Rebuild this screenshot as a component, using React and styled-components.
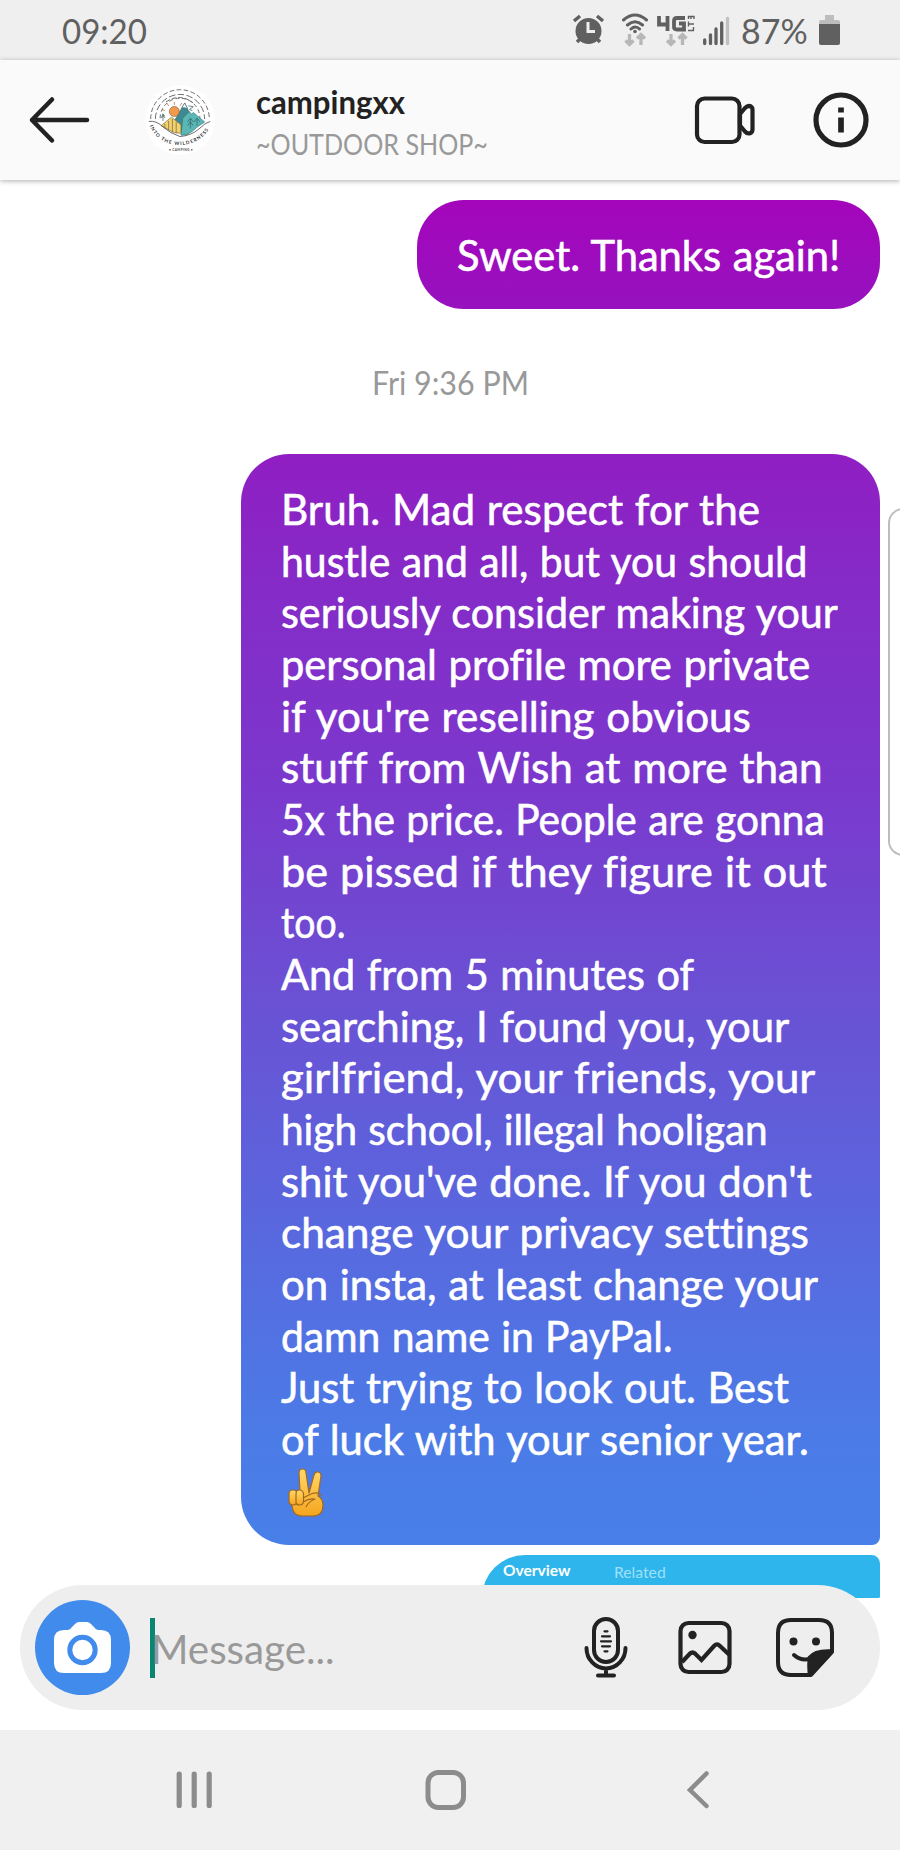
import React, { useLayoutEffect, useRef, useState } from "react";
import styled, { createGlobalStyle } from "styled-components";

const GlobalStyle = createGlobalStyle`
  * { box-sizing: border-box; }
  body {
    margin: 0;
    background: #fff;
    font-family: Lato, "Open Sans", sans-serif;
    font-variant-ligatures: none;
  }
`;

const Screen = styled.div`
  position: relative;
  display: flex;
  flex-direction: column;
  width: 900px;
  height: 1850px;
  overflow: hidden;
  background: #fff;
`;

const FitBox = styled.span`
  display: block;
  width: ${(p) => p.$width}px;
  white-space: nowrap;
`;
const FitInner = styled.span`
  display: inline-block;
  transform-origin: 0 50%;
  word-spacing: ${(p) => p.$gap || 0}px;
`;

/* One line of text, condensed or widened to a fixed measure. */
function Line({ width, gap, children }) {
  const ref = useRef(null);
  const [scale, setScale] = useState(1);
  useLayoutEffect(() => {
    setScale(width / ref.current.offsetWidth);
  }, [width, children]);
  return (
    <FitBox $width={width}>
      <FitInner ref={ref} $gap={gap} style={{ transform: `scaleX(${scale})` }}>
        {children}
      </FitInner>
    </FitBox>
  );
}

const StatusBar = styled.div`
  display: flex;
  align-items: center;
  justify-content: space-between;
  flex: none;
  height: 60px;
  padding: 0 60px 0 62px;
  background: #efefef;
  color: #606060;
  font-size: 35px;
  line-height: 40px;
`;
const StatusIcons = styled.div`
  display: flex;
  align-items: center;
  gap: 11px;
`;
const StatusGlyphs = styled.svg`
  display: block;
`;

const Header = styled.header`
  position: relative;
  z-index: 1;
  display: flex;
  align-items: center;
  flex: none;
  height: 120px;
  padding: 0 30px 0 28px;
  background: #fafafa;
  box-shadow: 0 1px 5px rgba(0, 0, 0, 0.32);
`;
const Icon = styled.svg`
  display: block;
  flex: none;
  overflow: visible;
`;
const Avatar = styled(Icon)`
  margin-left: 55px;
`;
const Account = styled.div`
  display: flex;
  flex-direction: column;
  flex: 1;
  margin-left: 41px;
  padding-top: 3px;
`;
const AccountName = styled.div`
  height: 44px;
  font-size: 33px;
  font-weight: 700;
  line-height: 42px;
  color: #222;
`;
const AccountNote = styled.div`
  font-size: 29px;
  line-height: 40px;
  color: #999;
`;
const HeaderActions = styled.div`
  display: flex;
  align-items: center;
  gap: 56px;
`;

const Thread = styled.main`
  display: flex;
  flex-direction: column;
  align-items: flex-end;
  flex: 1;
  min-height: 0;
  padding: 20px 20px 0 0;
  overflow: hidden;
`;
const Bubble = styled.div`
  flex: none;
  width: ${(p) => p.$width}px;
  height: ${(p) => p.$height}px;
  padding: ${(p) => p.$top}px 40px 0;
  border-radius: ${(p) => p.$corners};
  background: ${(p) => p.$fill};
  color: #fff;
  font-size: 42px;
  line-height: 51.65px;
  -webkit-text-stroke: 0.6px #fff;
`;
const Stamp = styled.time`
  display: flex;
  align-self: center;
  flex: none;
  height: 145px;
  margin-left: 20px;
  padding-top: 54px;
  color: #999;
  font-size: 32px;
  line-height: 40px;
`;
const Peace = styled(Icon)`
  margin: 3px 0 0 7px;
`;
const SharedCard = styled.div`
  display: flex;
  flex: none;
  align-items: flex-start;
  gap: 44px;
  width: 398px;
  height: 43px;
  margin-top: 10px;
  padding: 5px 0 0 21px;
  border-radius: 46px 9px 2px 0;
  background: #2eb5ec;
  font-size: 16px;
  line-height: 20px;
`;
const Tab = styled.span`
  padding-top: ${(p) => (p.$active ? 0 : 2)}px;
  font-weight: ${(p) => (p.$active ? 700 : 400)};
  color: ${(p) => (p.$active ? "#fff" : "#9fe0f8")};
`;

const EdgeHandle = styled.div`
  position: absolute;
  top: 508px;
  right: -4px;
  width: 16px;
  height: 348px;
  border: 2px solid #bdbdbd;
  border-radius: 15px 0 0 15px;
  background: #fff;
`;

const Composer = styled.div`
  position: absolute;
  left: 20px;
  right: 20px;
  bottom: 140px;
  display: flex;
  align-items: center;
  height: 125px;
  padding: 0 45px 0 15px;
  border-radius: 63px;
  background: #eee;
`;
const CameraButton = styled.div`
  display: flex;
  align-items: center;
  justify-content: center;
  width: 95px;
  height: 95px;
  border-radius: 50%;
  background: #408beb;
`;
const Caret = styled.div`
  width: 5px;
  height: 60px;
  margin-left: 20px;
  background: #098573;
`;
const Placeholder = styled.div`
  position: relative;
  flex: 1;
  margin-left: -4px;
  padding-top: 3px;
  font-size: 41px;
  line-height: 52px;
  color: #999;
`;
const ComposerActions = styled.div`
  display: flex;
  align-items: center;
  gap: 43px;
`;

const NavBar = styled.nav`
  display: flex;
  flex: none;
  align-items: center;
  height: 120px;
  padding-left: 176px;
  background: #f0f0f0;
`;
const NavGap = styled.div`
  width: ${(p) => p.$width}px;
`;

const STORY = [
  ["Bruh. Mad respect for the", 479],
  ["hustle and all, but you should", 527],
  ["seriously consider making your", 557],
  ["personal profile more private", 529],
  ["if you're reselling obvious", 470],
  ["stuff from Wish at more than", 542],
  ["5x the price. People are gonna", 544],
  ["be pissed if they figure it out", 546],
  ["too.", 65],
  ["And from 5 minutes of", 413],
  ["searching, I found you, your", 508],
  ["girlfriend, your friends, your", 534],
  ["high school, illegal hooligan", 487],
  ["shit you've done. If you don't", 531],
  ["change your privacy settings", 528],
  ["on insta, at least change your", 537],
  ["damn name in PayPal.", 392],
  ["Just trying to look out. Best", 508],
  ["of luck with your senior year.", 528],
];

function StatusDrawing() {
  return (
    <StatusGlyphs width="158" height="36" viewBox="571 12 158 36" fill="none">
      <g stroke="#606060" strokeLinecap="round">
        <circle cx="587.5" cy="31" r="13" fill="#606060" stroke="none" />
        <path d="M573 21l6-5M602 21l-6-5M576 42l4-4M599 42l-4-4" strokeWidth="3.5" strokeLinecap="butt" />
        <path d="M587 22v9.5h7" stroke="#efefef" strokeWidth="3" strokeLinecap="butt" />
        <path d="M622.5 20q11.5-10 23 0M626.5 25q7.5-6.500 15 0M630 29q4.500-4 8.500 0" strokeWidth="3" />
        <circle cx="634" cy="31.5" r="1.8" fill="#606060" stroke="none" />
      </g>
      <path
        d="M628.500 34v10M624.500 40.500l4 4 4-4M640 45V35M636 38.500l4-4 4 4M670 34v10M666 40.500l4 4 4-4M681.500 45V35M677.500 38.500l4-4 4 4"
        stroke="#b7b7b7"
        strokeWidth="3.3"
      />
      <path
        d="M658 16v8.500h10M666.500 16v15M684 18h-8q-3 0-3 3v6q0 2.500 3 2.500h7v-6h-5"
        stroke="#606060"
        strokeWidth="3.8"
      />
      <path d="M692.500 27v3.500M687 30.500h6M687 24h6M687.500 21.500v5M687.500 19v-2.500h5.500V19M690 16.500V19" stroke="#606060" strokeWidth="1.4" />
      <g strokeWidth="3.3" strokeLinecap="round">
        <path d="M703.700 40v3.500M709.500 35v8.500M715 29v14.500M720.700 23v20.500" stroke="#606060" />
        <path d="M726.500 18.500v25" stroke="#c0c0c0" />
      </g>
    </StatusGlyphs>
  );
}

function Battery() {
  return (
    <Icon width="21" height="31" viewBox="0 0 21 31">
      <path d="M6 0h9v5h4q2 0 2 2v3H0V7q0-2 2-2h4z" fill="#bdbdbd" />
      <path d="M0 9h21v19q0 2-2 2H2q-2 0-2-2z" fill="#606060" />
    </Icon>
  );
}

function ShopLogo() {
  return (
    <Avatar width="70" height="70" viewBox="143 83 74 74" fill="none">
      <defs>
        <path id="wilderness" d="M148 126C158 153.500 202 153.500 212.500 125" />
      </defs>
      <circle cx="180" cy="120" r="37" fill="#fff" />
      <g stroke="#666" strokeWidth="1">
        <path d="M149 119a31 31 0 0 1 62 0" strokeDasharray="5 2.500" />
        <path d="M154 119a26 26 0 0 1 52 0" strokeDasharray="7 2.500" />
        <path d="M159 118a21 21 0 0 1 42 0" strokeDasharray="4 3" />
        <path d="M165 101q15-10 29 1" strokeDasharray="5 2" />
      </g>
      <path
        d="M174 104v-3M168 105l-2-3M180 105l2-3M164 110l-3-1M164 115l-3 2M184 108l3-2"
        stroke="#b87a50"
        strokeWidth=".9"
      />
      <path d="M174 121l11-19 8 17-7 17-11-8z" fill="#3f8990" stroke="#35646b" strokeWidth=".7" />
      <path d="M182 107l3-5 3 6-3-1z" fill="#fff" stroke="#35646b" strokeWidth=".6" />
      <circle cx="174" cy="111" r="5.300" fill="#f39a4a" stroke="#71553e" strokeWidth=".6" />
      <path d="M181 136l2-18 7-7 2 3 2-2 12 10q-8 5-13 10-6 5-12 4z" fill="#5bb7b5" stroke="#38777b" strokeWidth=".7" />
      <path d="M160 126l11-9 10 8v9q-8 0-12-3z" fill="#f3d16b" stroke="#776b4a" strokeWidth=".7" />
      <path d="M164 124v5M168 121v10M172 119v14M176 122v12" stroke="#78704d" strokeWidth=".8" />
      <path
        d="M191 119v10M188 122l3-4 3 4M188 126l3-4 3 4M198 119v7M195 122l3-4 3 4M162 121v-8M160 118l2-4 2 4M189 105l5 1-4 3 3 1"
        stroke="#32676b"
        strokeWidth=".8"
      />
      <path d="M147 121.500q8-1 14 5 9 8 19 11 12-1 20-8 7-7 12-8" stroke="#555" strokeWidth=".9" />
      <text fill="#333" fontSize="5" fontWeight="700" fontFamily="Lato, sans-serif">
        <textPath href="#wilderness" textLength="76">
          INTO THE WILDERNESS
        </textPath>
      </text>
      <text x="181" y="153" fill="#555" fontSize="3.500" fontWeight="700" textAnchor="middle" textLength="25" fontFamily="Lato, sans-serif">
        • CAMPING •
      </text>
    </Avatar>
  );
}

function PeaceHand() {
  return (
    <Peace width="37" height="49" viewBox="0 0 37 49" role="img" aria-label="Victory hand">
      <defs>
        <linearGradient id="skin" x1="0" y1="0" x2="0" y2="1">
          <stop offset="0" stopColor="#ffd969" />
          <stop offset="1" stopColor="#f5a51d" />
        </linearGradient>
      </defs>
      <g fill="url(#skin)" stroke="#a46722" strokeWidth="1.2" strokeLinejoin="round">
        <path d="M12 24L11 5q0-4 3.500-4T18 5l3 20 5-18q1-3.500 4-3t3 4l-3 20q5 3 5 9 0 11-10 11H14Q5 48 4 38L3 28z" />
        <path d="M1 26q0-4 4-4t4 4v7q0 4-4 4t-4-4z" />
        <path d="M8 26q0-4 3.500-4t4 4v7q0 4-4 4T8 33z" />
        <path d="M15 30l8-4q8-3 10 2M15 34q6-4 12-3-7 3-9 8" fill="none" />
      </g>
    </Peace>
  );
}

export default function App() {
  return (
    <>
      <GlobalStyle />
      <Screen>
        <StatusBar>
          <Line width={85}>09:20</Line>
          <StatusIcons>
            <StatusDrawing />
            <Line width={67}>87%</Line>
            <Battery />
          </StatusIcons>
        </StatusBar>

        <Header>
          <Icon width="62" height="48" viewBox="28 95 62 48" fill="none" stroke="#222" strokeWidth="4.5" strokeLinecap="round" strokeLinejoin="round">
            <path d="M52 98.500L32 119l20 20.500M32 119h55" />
          </Icon>
          <ShopLogo />
          <Account>
            <AccountName>
              <Line width={149}>campingxx</Line>
            </AccountName>
            <AccountNote>
              <Line width={232}>~OUTDOOR SHOP~</Line>
            </AccountNote>
          </Account>
          <HeaderActions>
            <Icon width="62" height="50" viewBox="694 95 62 50" fill="none" stroke="#222" strokeWidth="4.2" strokeLinejoin="round">
              <rect x="697" y="98.500" width="42.500" height="43.500" rx="7.500" />
              <path d="M740 114l5-6q3-3 6-1.500 1.500 1 1.500 3v20q0 2.500-2 3.500-3 1.300-5.500-1.500l-5-6z" />
            </Icon>
            <Icon width="58" height="58" viewBox="811 91 58 58" fill="none" stroke="#222" strokeWidth="5.2">
              <circle cx="840" cy="120" r="25" />
              <path d="M840 107.500v5M840 117.500v15" strokeWidth="5.700" />
            </Icon>
          </HeaderActions>
        </Header>

        <Thread>
          <Bubble $width={463} $height={109} $top={29.5} $corners="47px" $fill="linear-gradient(#a405bb, #9712bf)">
            <Line width={383} gap={1}>Sweet. Thanks again!</Line>
          </Bubble>
          <Stamp>
            <Line width={157}>Fri 9:36 PM</Line>
          </Stamp>
          <Bubble
            $width={639}
            $height={1091}
            $top={30}
            $corners="48px 48px 8px 48px"
            $fill="linear-gradient(#901ec3 0%, #852bc7 12%, #7b38cd 30%, #6a51d4 50%, #5869df 72%, #4b7be7 90%, #487fe8 100%)"
          >
            {STORY.map(([text, width]) => (
              <Line key={text} width={width} gap={1}>
                {text}
              </Line>
            ))}
            <PeaceHand />
          </Bubble>
          <SharedCard>
            <Tab $active>
              <Line width={67}>Overview</Line>
            </Tab>
            <Tab>
              <Line width={52}>Related</Line>
            </Tab>
          </SharedCard>
        </Thread>

        <NavBar>
          <Icon width="36" height="40" viewBox="0 0 36 40" stroke="#8c8c8c" strokeWidth="5.2" strokeLinecap="round">
            <path d="M3.200 4v31.500M18.200 4v31.500M33.200 4v31.500" />
          </Icon>
          <NavGap $width={213} />
          <Icon width="41" height="40" viewBox="0 0 41 40" fill="none" stroke="#8c8c8c" strokeWidth="5">
            <rect x="3" y="2.500" width="35.500" height="35" rx="10.500" />
          </Icon>
          <NavGap $width={220} />
          <Icon width="24" height="40" viewBox="0 0 24 40" fill="none" stroke="#8c8c8c" strokeWidth="4.5" strokeLinecap="round">
            <path d="M20.500 3.500L4 20l16.500 16" />
          </Icon>
        </NavBar>

        <EdgeHandle />

        <Composer>
          <CameraButton>
            <Icon width="57" height="51" viewBox="54 1619 57 51">
              <path
                d="M64 1627h4q2 0 4-3l3-3q2-2 4-2h8q2 0 4 2l3 3q2 3 4 3h3q10 0 10 10v23q0 10-10 10H64q-10 0-10-10v-23q0-10 10-10z"
                fill="#fff"
              />
              <circle cx="82.500" cy="1647" r="12.700" fill="#fff" stroke="#408beb" strokeWidth="5" />
            </Icon>
          </CameraButton>
          <Caret />
          <Placeholder>
            <Line width={184}>Message...</Line>
          </Placeholder>
          <ComposerActions>
            <Icon width="58" height="64" viewBox="576 1616 58 64" fill="none" stroke="#222" strokeWidth="4" strokeLinecap="round">
              <rect x="593" y="1619" width="24" height="43" rx="12" />
              <path d="M585.500 1648a19.500 20.500 0 0 0 39 0M605 1669v6M597 1675.500h16" />
              <path d="M603.500 1631.300h3M601 1636.300h8M600 1641.300h10M601 1646.300h8M603.500 1651.300h3" strokeWidth="2.200" />
            </Icon>
            <Icon width="54" height="54" viewBox="678 1621 54 54" fill="none" stroke="#222" strokeWidth="4.2">
              <rect x="680.500" y="1623" width="49" height="49" rx="8" />
              <circle cx="692.500" cy="1635" r="4.200" fill="#222" stroke="none" />
              <path d="M682 1662l8-8.500q2.500-2 5 0l6.500 6.500L714 1646q3-3 6 0l9 8.500" />
            </Icon>
            <Icon width="60" height="60" viewBox="775 1618 60 60" fill="none" stroke="#222" strokeWidth="4" strokeLinecap="round" strokeLinejoin="round">
              <path d="M832 1652v-19q0-13-13-13h-28q-13 0-13 13v29q0 13 13 13h20z" />
              <path d="M808.500 1675q-1-12 0-18 6-8 23-7v4l-20 21z" fill="#222" strokeWidth="1.500" />
              <circle cx="793.500" cy="1641.500" r="4" fill="#222" stroke="none" />
              <circle cx="816" cy="1641.500" r="4" fill="#222" stroke="none" />
              <path d="M794 1655q9 8 21 2" />
            </Icon>
          </ComposerActions>
        </Composer>
      </Screen>
    </>
  );
}
